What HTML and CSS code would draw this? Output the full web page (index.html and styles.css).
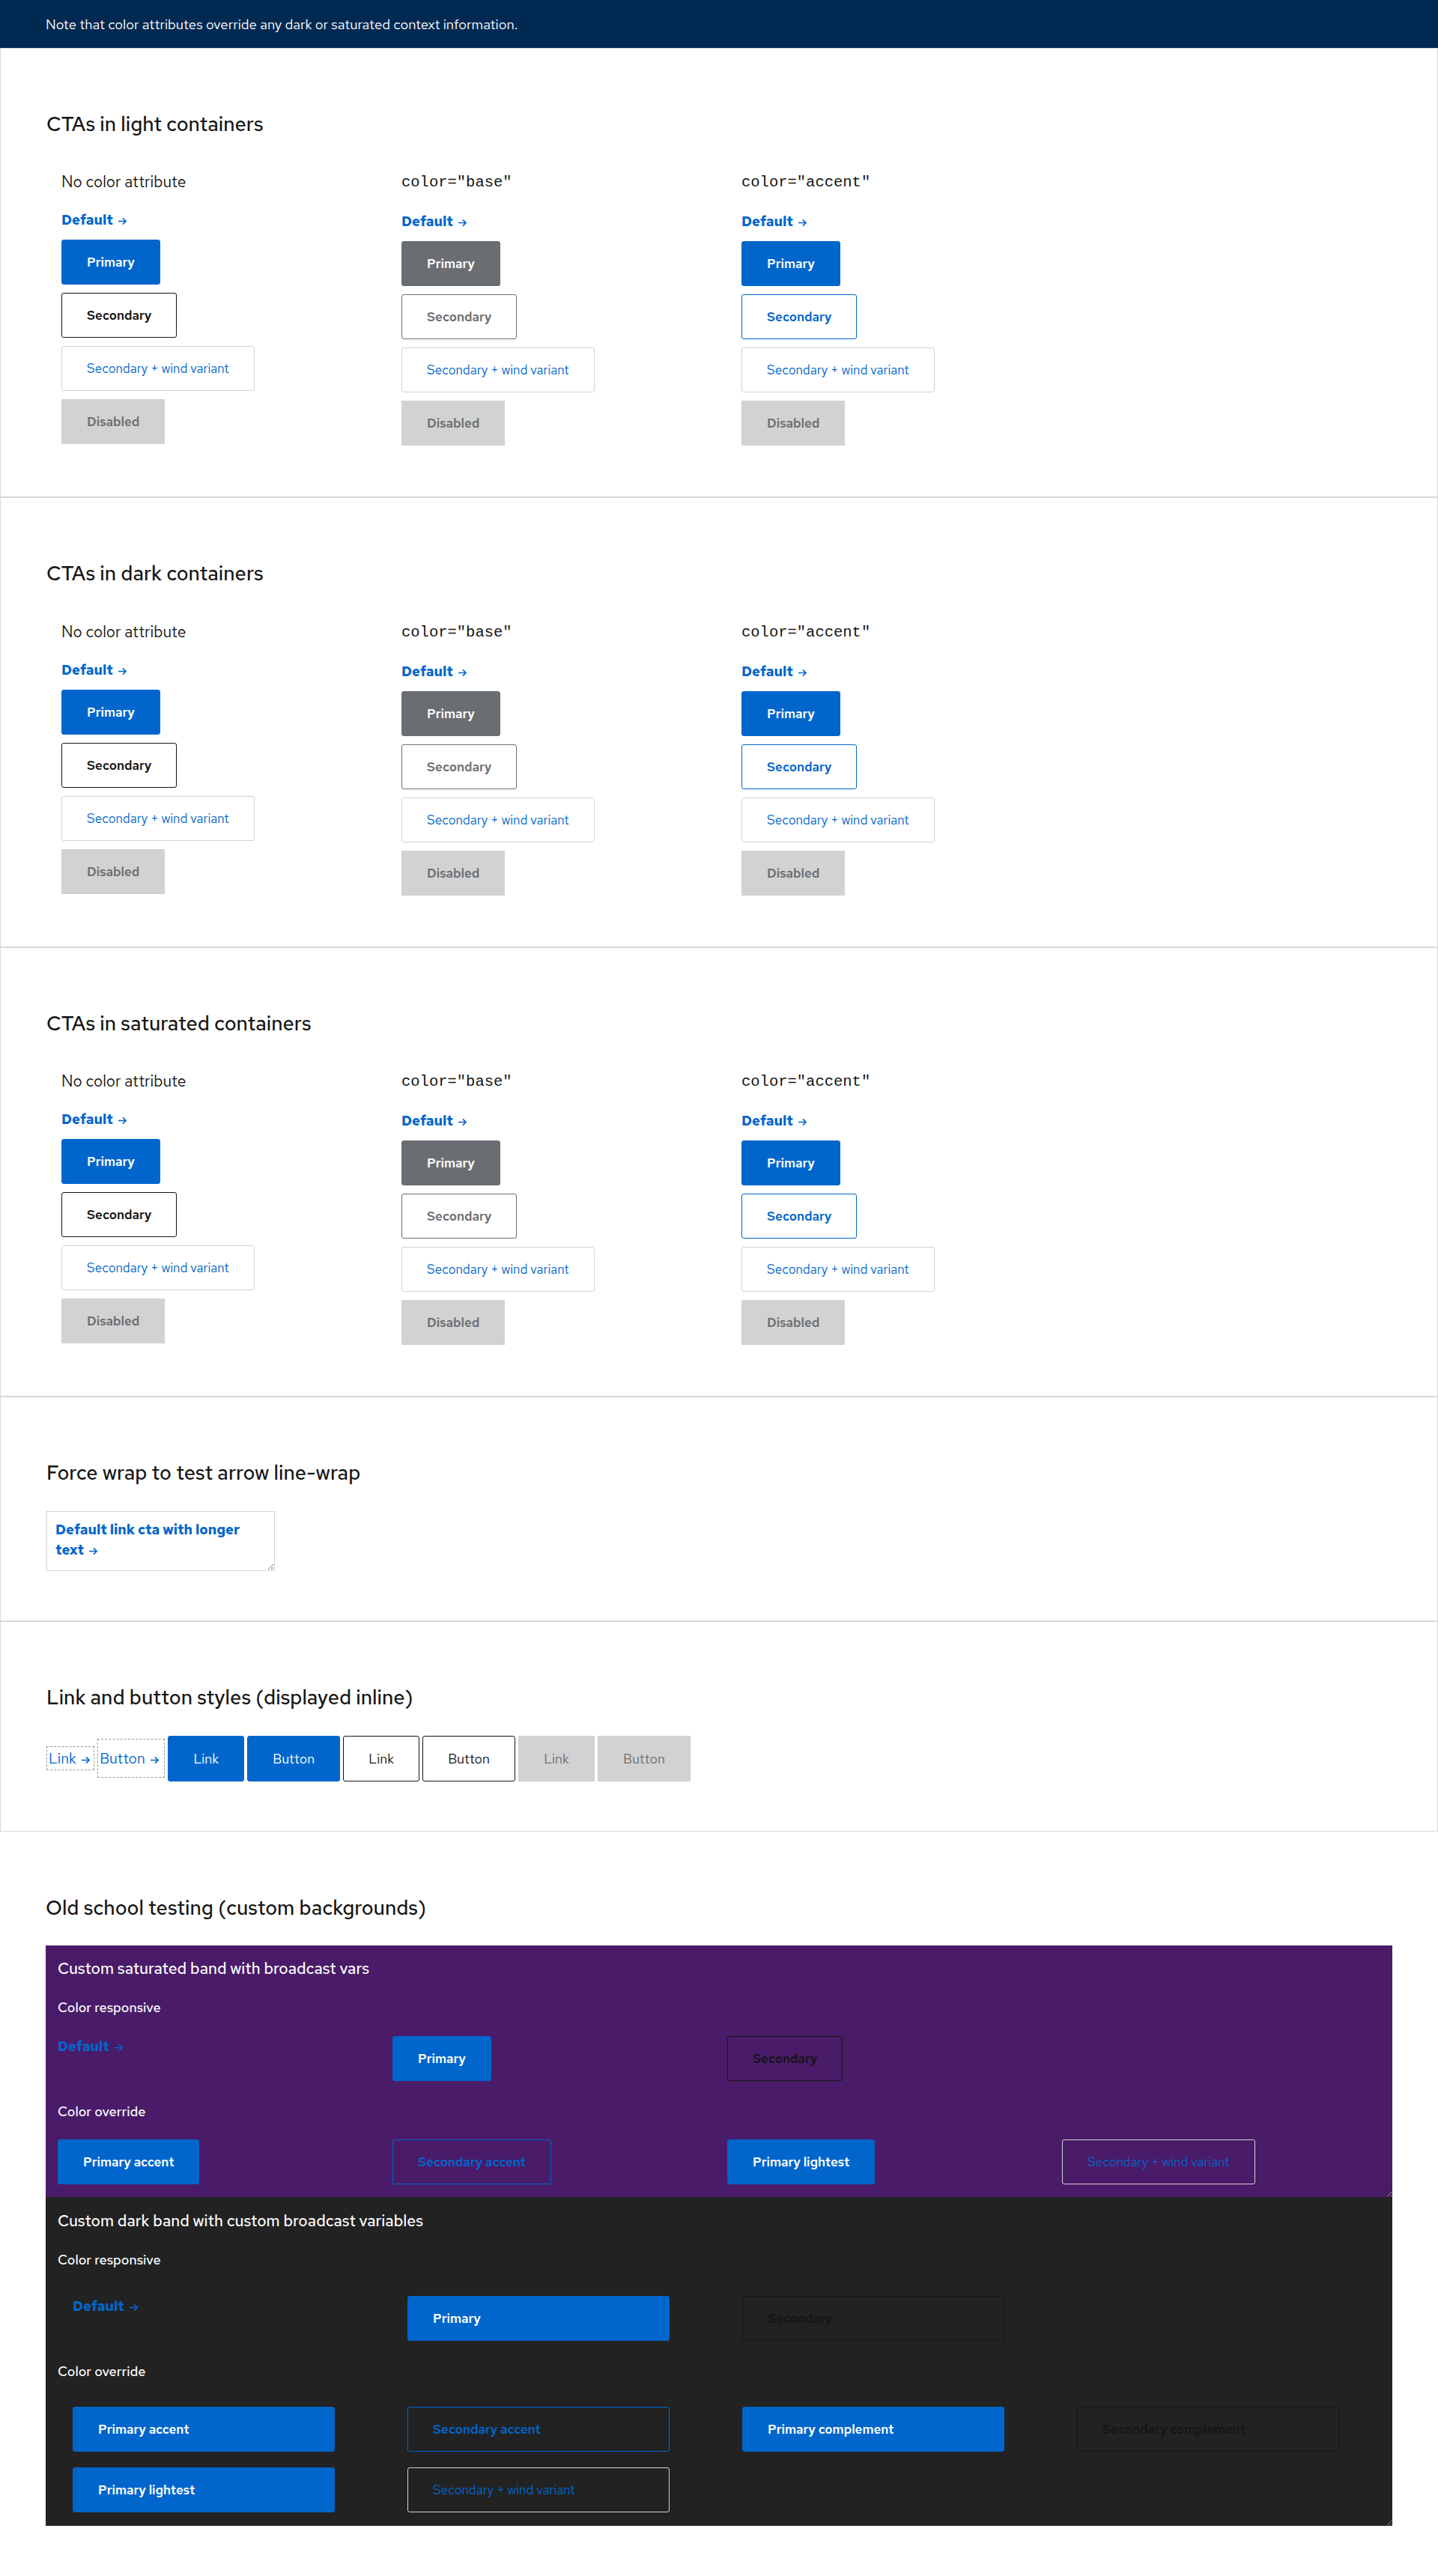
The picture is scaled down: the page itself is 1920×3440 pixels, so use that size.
FILE: index.html
```html
<!DOCTYPE html>
<html lang="en">
<head>
<meta charset="utf-8">
<title>CTA tests</title>
<link rel="stylesheet" href="styles.css">
</head>
<body>
<div class="note">Note that color attributes override any dark or saturated context information.</div>

<section class="panel">
  <h2 class="panel-title">CTAs in light containers</h2>
  <div class="cols">
    <div class="col">
      <h3 class="col-label">No color attribute</h3>
      <a class="cta-link">Default <svg class="arrow" viewBox="0 0 14 12"><path d="M1 6h11.5M7.5 1.5 12 6l-4.5 4.5"/></svg></a>
      <a class="btn btn-primary">Primary</a>
      <a class="btn btn-secondary">Secondary</a>
      <a class="btn btn-wind">Secondary + wind variant</a>
      <a class="btn btn-disabled">Disabled</a>
    </div>
    <div class="col col-base">
      <h3 class="col-label code">color="base"</h3>
      <a class="cta-link">Default <svg class="arrow" viewBox="0 0 14 12"><path d="M1 6h11.5M7.5 1.5 12 6l-4.5 4.5"/></svg></a>
      <a class="btn btn-primary">Primary</a>
      <a class="btn btn-secondary">Secondary</a>
      <a class="btn btn-wind">Secondary + wind variant</a>
      <a class="btn btn-disabled">Disabled</a>
    </div>
    <div class="col col-accent">
      <h3 class="col-label code">color="accent"</h3>
      <a class="cta-link">Default <svg class="arrow" viewBox="0 0 14 12"><path d="M1 6h11.5M7.5 1.5 12 6l-4.5 4.5"/></svg></a>
      <a class="btn btn-primary">Primary</a>
      <a class="btn btn-secondary">Secondary</a>
      <a class="btn btn-wind">Secondary + wind variant</a>
      <a class="btn btn-disabled">Disabled</a>
    </div>
  </div>
</section>

<section class="panel">
  <h2 class="panel-title">CTAs in dark containers</h2>
  <div class="cols">
    <div class="col">
      <h3 class="col-label">No color attribute</h3>
      <a class="cta-link">Default <svg class="arrow" viewBox="0 0 14 12"><path d="M1 6h11.5M7.5 1.5 12 6l-4.5 4.5"/></svg></a>
      <a class="btn btn-primary">Primary</a>
      <a class="btn btn-secondary">Secondary</a>
      <a class="btn btn-wind">Secondary + wind variant</a>
      <a class="btn btn-disabled">Disabled</a>
    </div>
    <div class="col col-base">
      <h3 class="col-label code">color="base"</h3>
      <a class="cta-link">Default <svg class="arrow" viewBox="0 0 14 12"><path d="M1 6h11.5M7.5 1.5 12 6l-4.5 4.5"/></svg></a>
      <a class="btn btn-primary">Primary</a>
      <a class="btn btn-secondary">Secondary</a>
      <a class="btn btn-wind">Secondary + wind variant</a>
      <a class="btn btn-disabled">Disabled</a>
    </div>
    <div class="col col-accent">
      <h3 class="col-label code">color="accent"</h3>
      <a class="cta-link">Default <svg class="arrow" viewBox="0 0 14 12"><path d="M1 6h11.5M7.5 1.5 12 6l-4.5 4.5"/></svg></a>
      <a class="btn btn-primary">Primary</a>
      <a class="btn btn-secondary">Secondary</a>
      <a class="btn btn-wind">Secondary + wind variant</a>
      <a class="btn btn-disabled">Disabled</a>
    </div>
  </div>
</section>

<section class="panel">
  <h2 class="panel-title">CTAs in saturated containers</h2>
  <div class="cols">
    <div class="col">
      <h3 class="col-label">No color attribute</h3>
      <a class="cta-link">Default <svg class="arrow" viewBox="0 0 14 12"><path d="M1 6h11.5M7.5 1.5 12 6l-4.5 4.5"/></svg></a>
      <a class="btn btn-primary">Primary</a>
      <a class="btn btn-secondary">Secondary</a>
      <a class="btn btn-wind">Secondary + wind variant</a>
      <a class="btn btn-disabled">Disabled</a>
    </div>
    <div class="col col-base">
      <h3 class="col-label code">color="base"</h3>
      <a class="cta-link">Default <svg class="arrow" viewBox="0 0 14 12"><path d="M1 6h11.5M7.5 1.5 12 6l-4.5 4.5"/></svg></a>
      <a class="btn btn-primary">Primary</a>
      <a class="btn btn-secondary">Secondary</a>
      <a class="btn btn-wind">Secondary + wind variant</a>
      <a class="btn btn-disabled">Disabled</a>
    </div>
    <div class="col col-accent">
      <h3 class="col-label code">color="accent"</h3>
      <a class="cta-link">Default <svg class="arrow" viewBox="0 0 14 12"><path d="M1 6h11.5M7.5 1.5 12 6l-4.5 4.5"/></svg></a>
      <a class="btn btn-primary">Primary</a>
      <a class="btn btn-secondary">Secondary</a>
      <a class="btn btn-wind">Secondary + wind variant</a>
      <a class="btn btn-disabled">Disabled</a>
    </div>
  </div>
</section>

<section class="panel panel-short">
  <h2 class="panel-title">Force wrap to test arrow line-wrap</h2>
  <div class="wrapbox">
    <a class="cta-link wrap-link">Default link cta with longer <span class="keep">text <svg class="arrow" viewBox="0 0 14 12"><path d="M1 6h11.5M7.5 1.5 12 6l-4.5 4.5"/></svg></span></a>
  </div>
</section>

<section class="panel panel-short">
  <h2 class="panel-title">Link and button styles (displayed inline)</h2>
  <div class="inline-row">
    <a class="dash dash-link">Link <svg class="arrow" viewBox="0 0 14 12"><path d="M1 6h11.5M7.5 1.5 12 6l-4.5 4.5"/></svg></a>
    <span class="dash dash-button">Button <svg class="arrow" viewBox="0 0 14 12"><path d="M1 6h11.5M7.5 1.5 12 6l-4.5 4.5"/></svg></span>
    <a class="ibtn ibtn-primary">Link</a>
    <span class="ibtn ibtn-primary">Button</span>
    <a class="ibtn ibtn-secondary">Link</a>
    <span class="ibtn ibtn-secondary">Button</span>
    <a class="ibtn ibtn-disabled">Link</a>
    <span class="ibtn ibtn-disabled">Button</span>
  </div>
</section>

<section class="oldschool">
  <h2 class="panel-title">Old school testing (custom backgrounds)</h2>
  <div class="band band-purple">
    <h3 class="band-title">Custom saturated band with broadcast vars</h3>
    <h4 class="band-label">Color responsive</h4>
    <div class="band-row">
      <a class="cta-link">Default <svg class="arrow" viewBox="0 0 14 12"><path d="M1 6h11.5M7.5 1.5 12 6l-4.5 4.5"/></svg></a>
      <a class="btn btn-primary">Primary</a>
      <a class="btn btn-dark-secondary">Secondary</a>
    </div>
    <h4 class="band-label band-label-2">Color override</h4>
    <div class="band-row">
      <a class="btn btn-primary">Primary accent</a>
      <a class="btn btn-accent-secondary">Secondary accent</a>
      <a class="btn btn-primary">Primary lightest</a>
      <a class="btn btn-wind">Secondary + wind variant</a>
    </div>
  </div>
  <div class="band band-dark">
    <h3 class="band-title">Custom dark band with custom broadcast variables</h3>
    <h4 class="band-label">Color responsive</h4>
    <div class="band-grid">
      <a class="cta-link">Default <svg class="arrow" viewBox="0 0 14 12"><path d="M1 6h11.5M7.5 1.5 12 6l-4.5 4.5"/></svg></a>
      <a class="btn btn-primary">Primary</a>
      <a class="btn btn-dark-secondary">Secondary</a>
    </div>
    <h4 class="band-label band-label-2">Color override</h4>
    <div class="band-grid">
      <a class="btn btn-primary">Primary accent</a>
      <a class="btn btn-accent-secondary">Secondary accent</a>
      <a class="btn btn-primary">Primary complement</a>
      <a class="btn btn-dark-secondary">Secondary complement</a>
      <a class="btn btn-primary">Primary lightest</a>
      <a class="btn btn-wind">Secondary + wind variant</a>
    </div>
  </div>
</section>
</body>
</html>
```

FILE: styles.css
```css
* { box-sizing: border-box; }

body {
  margin: 0;
  font-family: "Red Hat Text", "Open Sans", "Noto Sans", sans-serif;
  color: #151515;
  background: #fff;
}

.note {
  height: 64px;
  display: flex;
  align-items: center;
  padding-left: 61px;
  background: #002952;
  color: #fff;
  font-size: 18.5px;
}

.panel {
  border: 1px solid #d8d8d8;
  padding: 85px 61px 68px;
}

.panel-short { padding-bottom: 66px; }

.panel-title {
  margin: 0;
  font-size: 27px;
  font-weight: 500;
  line-height: 1.2;
  color: #151515;
}

.cols {
  display: grid;
  grid-template-columns: repeat(3, 454px);
  padding-left: 20px;
  margin-top: 46px;
  align-items: start;
}

.col {
  display: flex;
  flex-direction: column;
  align-items: flex-start;
  gap: 11px;
}

.col-label {
  margin: 0 0 11px;
  font-size: 21px;
  font-weight: 400;
  line-height: 30px;
}

.col-label.code {
  font-family: "Liberation Mono", monospace;
  font-size: 20.5px;
  line-height: 32px;
  margin-bottom: 11px;
}

.cta-link {
  font-size: 18.5px;
  font-weight: 700;
  line-height: 27px;
  color: #0066cc;
  margin-bottom: 2px;
  white-space: nowrap;
}

.arrow {
  width: 13px;
  height: 11px;
  margin-left: 2px;
  vertical-align: -1px;
  fill: none;
  stroke: currentColor;
  stroke-width: 1.8;
}

.btn {
  display: inline-block;
  font-size: 17px;
  font-weight: 600;
  line-height: 26px;
  padding: 16px 33px;
  border: 1px solid transparent;
  border-radius: 3px;
  white-space: nowrap;
}

.btn-primary { background: #0066cc; border-color: #0066cc; color: #fff; }
.btn-secondary { background: #fff; border-color: #151515; color: #151515; }
.btn-wind { border-color: #d2d2d2; color: #0066cc; font-weight: 400; }
.btn-disabled { background: #d2d2d2; border-color: #d2d2d2; color: #6a6e73; border-radius: 0; }

.col-base .btn-primary { background: #6a6e73; border-color: #6a6e73; }
.col-base .btn-secondary { border-color: #6a6e73; color: #6a6e73; }
.col-accent .btn-secondary { border-color: #0066cc; color: #0066cc; }

.col .btn-wind { background: #fff; }

/* Force wrap */
.wrapbox {
  width: 305px;
  height: 80px;
  margin-top: 34px;
  border: 1px solid #d2d2d2;
  padding: 10px 11px;
  resize: both;
  overflow: auto;
}

.wrap-link {
  white-space: normal;
  line-height: 27.5px;
}

.keep { white-space: nowrap; }

/* Inline row */
.inline-row {
  margin-top: 35px;
  font-size: 18px;
  line-height: 27px;
}

.dash {
  display: inline-block;
  border: 1px dashed #9a9a9a;
  color: #0066cc;
  font-weight: 400;
  font-size: 19.5px;
}

.dash-link { padding: 1px 4px 1px 2px; line-height: 28px; }
.dash-button { padding: 11px 6px 11px 2px; line-height: 28px; }

.ibtn {
  display: inline-block;
  padding: 16px 33px;
  border: 1px solid transparent;
  border-radius: 3px;
  font-weight: 400;
}

.ibtn-primary { background: #0066cc; border-color: #0066cc; color: #fff; }
.ibtn-secondary { border-color: #151515; color: #151515; }
.ibtn-disabled { background: #d2d2d2; border-color: #d2d2d2; color: #6a6e73; border-radius: 0; }

/* Old school */
.oldschool {
  padding: 86px 61px 68px;
}

.band {
  padding: 16px 16px 17px;
  resize: both;
  overflow: auto;
}

.band-purple { margin-top: 34px; background: #4a1b68; }
.band-dark { background: #222222; padding-top: 17px; padding-bottom: 18px; }

.band-title {
  margin: 0;
  font-size: 21px;
  font-weight: 500;
  line-height: 30px;
  color: #fff;
}

.band-label {
  margin: 24px 0 0;
  font-size: 18px;
  font-weight: 500;
  line-height: 25.5px;
  color: #fff;
}

.band-label-2 { margin-top: 28px; }

.band-row {
  display: grid;
  grid-template-columns: repeat(4, 425px);
  column-gap: 22px;
  margin-top: 25px;
  align-items: start;
  justify-items: start;
}

.band-grid {
  display: grid;
  grid-template-columns: repeat(4, 350px);
  column-gap: 97px;
  row-gap: 21px;
  margin-top: 35px;
  padding-left: 20px;
  align-items: start;
}

.band-grid .btn { display: block; }
.band-grid .cta-link { justify-self: start; }

.btn-dark-secondary { border-color: #151515; color: #151515; background: transparent; }
.btn-accent-secondary { border-color: #0066cc; color: #0066cc; background: transparent; }
.band .btn-wind { background: transparent; }
```
